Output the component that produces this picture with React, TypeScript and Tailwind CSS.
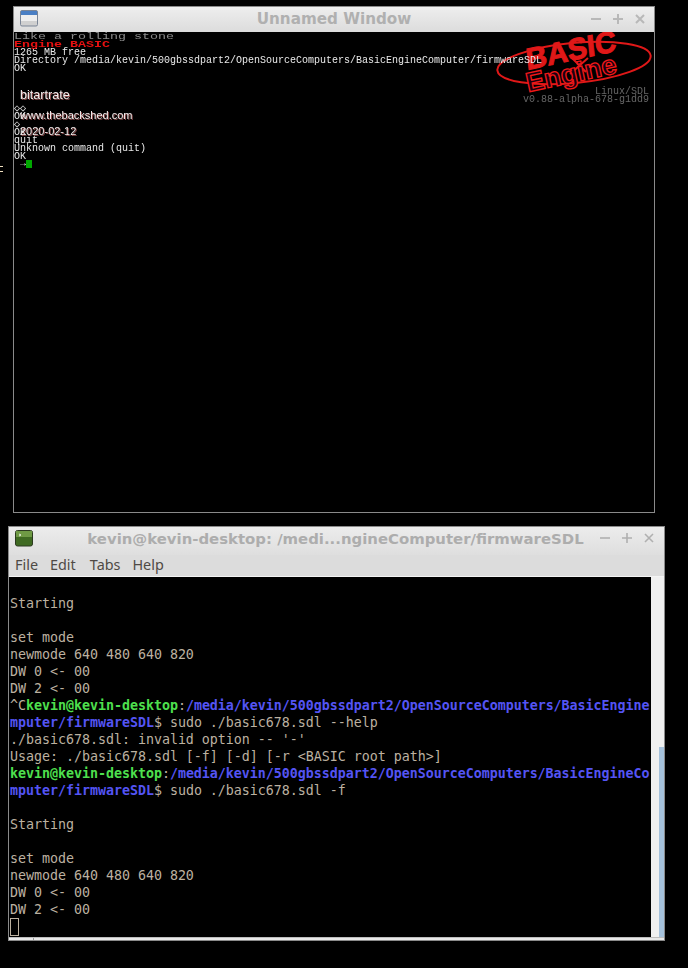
import React from "react";

const W = ({ c, children }: { c?: string; children: React.ReactNode }) => <span className={c}>{children}</span>;

function TermLine({ children }: { children?: React.ReactNode }) {
  return <div className="h-[17px] whitespace-pre">{children}</div>;
}

const G = "font-bold text-[#4ee04e]";
const B = "font-bold text-[#5454f4]";

function Logo() {
  return (
    <svg className="absolute left-[480px] top-0" width="170" height="70" viewBox="0 0 170 70">
      <ellipse cx="80" cy="31" rx="77" ry="20" transform="rotate(-5.5 80 31)" fill="none" stroke="#e01818" strokeWidth="2" />
      <path d="M76 42L94 26M78 26l14 14" stroke="#e01818" strokeWidth="2" fill="none" />
      <g fontFamily="'Liberation Sans', sans-serif" fontWeight="700">
        <text transform="translate(33 38) rotate(-12) skewX(-6)" fontSize="30" fill="#e01818" stroke="#e01818" strokeWidth="1" textLength="92" lengthAdjust="spacingAndGlyphs">BASIC</text>
        <text transform="translate(34 60) rotate(-12)" fontSize="27" fill="#1a0010" stroke="#f01818" strokeWidth="1.3" textLength="92" lengthAdjust="spacingAndGlyphs">Engine</text>
      </g>
    </svg>
  );
}

export default function App() {
  return (
    <div className="relative w-[688px] h-[968px] bg-black overflow-hidden pt-[6px]">
      <div className="absolute left-0 top-[166px] flex flex-col gap-[4px]">
        <div className="w-[3px] h-px bg-[#f0e0c0]" />
        <div className="w-[3px] h-px bg-[#f0e0c0]" />
      </div>

      {/* top window */}
      <div className="ml-[13px] w-[642px] h-[507px] border border-[#8a8a8a] flex flex-col bg-black">
        <div className="relative h-[25px] shrink-0 bg-gradient-to-b from-[#eeeeee] to-[#dcdcdc] flex items-center justify-center pb-px">
          <svg className="absolute left-[6px] top-[3px]" width="18" height="17" viewBox="0 0 18 17">
            <rect x="0.5" y="0.5" width="17" height="15.5" rx="1.5" fill="#d0d0d0" stroke="#7a8596" />
            <rect x="1" y="1" width="16" height="4" fill="#4a7fc4" />
            <rect x="1" y="5" width="16" height="6" fill="#eeeeee" />
          </svg>
          <span className="font-['DejaVu_Sans',sans-serif] font-bold text-[15.2px] text-[#b0b0b0]">Unnamed Window</span>
          <div className="absolute right-[9px] top-[6px] flex gap-[12px] text-[#b8b8b8]">
            <svg width="10" height="12" viewBox="0 0 10 12"><path d="M0 6h10" stroke="currentColor" strokeWidth="2" /></svg>
            <svg width="10" height="12" viewBox="0 0 10 12"><path d="M0 6h10M5 1v10" stroke="currentColor" strokeWidth="2" /></svg>
            <svg width="10" height="12" viewBox="0 0 10 12"><path d="M1 2l8 8M9 2l-8 8" stroke="currentColor" strokeWidth="2" /></svg>
          </div>
        </div>
        <div className="relative flex-1 overflow-hidden">
          <Logo />
          <div className="relative z-10 font-['Liberation_Mono',monospace] text-[10px] leading-[8px] text-[#e8e8e8] whitespace-pre pt-px [will-change:transform]">
            <div className="h-[8px] text-[13.33px] text-[#8c8c8c] scale-y-[0.7] origin-center">Like a rolling stone</div>
            <div className="h-[8px] text-[13.33px] font-bold text-[#e81010] scale-y-[0.7] origin-center">Engine BASIC</div>
            <div className="h-[8px]">1265 MB free</div>
            <div className="h-[8px]">Directory /media/kevin/500gbssdpart2/OpenSourceComputers/BasicEngineComputer/firmwareSDL</div>
            <div className="h-[8px]">OK</div>
            <div className="h-[32px]" />
            <div className="h-[8px]">◇◇</div>
            <div className="h-[8px]">OK</div>
            <div className="h-[8px]">◇</div>
            <div className="h-[8px]">OK</div>
            <div className="h-[8px]">quit</div>
            <div className="h-[8px]">Unknown command (quit)</div>
            <div className="h-[8px]">OK</div>
            <div className="h-[8px] -mt-px flex items-center pl-[6px]">
              <span>→</span>
              <span className="w-[6px] h-[8px] bg-[#00a800]" />
            </div>
          </div>
          <div className="absolute z-20 left-[6px] top-[55px] font-['Liberation_Sans',sans-serif] text-[12.6px] leading-[16px] text-[#f4eeee] [text-shadow:1px_1px_0_#8a4a4a]">bitartrate</div>
          <div className="absolute z-20 left-[6px] top-[76px] font-['Liberation_Sans',sans-serif] text-[11px] leading-[14px] text-[#f4eeee] [text-shadow:1px_1px_0_#8a4a4a]">www.thebackshed.com</div>
          <div className="absolute z-20 left-[6px] top-[92px] font-['Liberation_Sans',sans-serif] text-[11px] leading-[14px] text-[#f4eeee] [text-shadow:1px_1px_0_#8a4a4a]">2020-02-12</div>
          <div className="absolute z-10 right-[5px] top-[56px] text-right font-['Liberation_Mono',monospace] text-[10px] leading-[8px] text-[#666666] whitespace-pre">
            <div className="h-[8px]">Linux/SDL</div>
            <div className="h-[8px]">v0.88-alpha-678-g1dd9</div>
          </div>
        </div>
      </div>

      {/* bottom window */}
      <div className="ml-[8px] mt-[13px] w-[657px] h-[415px] border border-[#8a8a8a] flex flex-col bg-[#dcdcdc]">
        <div className="relative h-[28px] shrink-0 bg-gradient-to-b from-[#ececec] to-[#dedede] flex items-center justify-center pb-[4px]">
          <svg className="absolute left-[6px] top-[3px]" width="18" height="17" viewBox="0 0 18 17">
            <rect x="0.5" y="0.5" width="17" height="15.5" rx="2" fill="#3f6a22" stroke="#2c3a20" />
            <rect x="1" y="1" width="16" height="6" fill="#6f9a45" />
            <path d="M4 4l2 1-2 1" stroke="#fff" strokeWidth="0.8" fill="none" />
          </svg>
          <span className="font-['DejaVu_Sans',sans-serif] font-bold text-[14.9px] text-[#adadad] pr-[2px]">kevin@kevin-desktop: /medi...ngineComputer/firmwareSDL</span>
          <div className="absolute right-[10px] top-[5px] flex gap-[12px] text-[#b0b0b0]">
            <svg width="10" height="12" viewBox="0 0 10 12"><path d="M0 6h10" stroke="currentColor" strokeWidth="1.6" /></svg>
            <svg width="10" height="12" viewBox="0 0 10 12"><path d="M0 6h10M5 1v10" stroke="currentColor" strokeWidth="1.6" /></svg>
            <svg width="10" height="12" viewBox="0 0 10 12"><path d="M1 2l8 8M9 2l-8 8" stroke="currentColor" strokeWidth="1.6" /></svg>
          </div>
        </div>
        <div className="h-[22px] shrink-0 flex items-center pl-[6px] pb-[2px] gap-[12px] font-['Noto_Sans','Open_Sans',sans-serif] text-[14.4px] text-[#4f4a45] border-b border-[#f4f4f4]">
          <span>File</span><span>Edit</span><span className="ml-[2px]">Tabs</span><span>Help</span>
        </div>
        <div className="flex-1 flex min-h-0">
          <div className="flex-1 bg-black pl-[1px] pt-[1px] font-['DejaVu_Sans_Mono',monospace] text-[13.33px] tracking-[-0.03px] leading-[17px] text-[#bcb1a0] overflow-hidden">
            <TermLine />
            <TermLine>Starting</TermLine>
            <TermLine />
            <TermLine>set mode</TermLine>
            <TermLine>newmode 640 480 640 820</TermLine>
            <TermLine>DW 0 {"<-"} 00</TermLine>
            <TermLine>DW 2 {"<-"} 00</TermLine>
            <TermLine>^C<W c={G}>kevin@kevin-desktop</W>:<W c={B}>/media/kevin/500gbssdpart2/OpenSourceComputers/BasicEngine</W></TermLine>
            <TermLine><W c={B}>mputer/firmwareSDL</W>$ sudo ./basic678.sdl --help</TermLine>
            <TermLine>./basic678.sdl: invalid option -- '-'</TermLine>
            <TermLine>Usage: ./basic678.sdl [-f] [-d] [-r {"<BASIC root path>"}]</TermLine>
            <TermLine><W c={G}>kevin@kevin-desktop</W>:<W c={B}>/media/kevin/500gbssdpart2/OpenSourceComputers/BasicEngineCo</W></TermLine>
            <TermLine><W c={B}>mputer/firmwareSDL</W>$ sudo ./basic678.sdl -f</TermLine>
            <TermLine />
            <TermLine>Starting</TermLine>
            <TermLine />
            <TermLine>set mode</TermLine>
            <TermLine>newmode 640 480 640 820</TermLine>
            <TermLine>DW 0 {"<-"} 00</TermLine>
            <TermLine>DW 2 {"<-"} 00</TermLine>
            <div className="w-[9px] h-[18px] border border-[#bcb1a0]" />
          </div>
          <div className="w-[13px] shrink-0 bg-[#f0f0f0] flex flex-col justify-end items-end">
            <div className="w-[5px] h-[190px] bg-[#a6c2dc]" />
          </div>
        </div>
        <div className="h-[3px] shrink-0 bg-[#e8e8e8] border-t border-[#bdbdbd] flex">
          <div className="w-[25px] border-r border-[#9a9a9a]" />
        </div>
      </div>
    </div>
  );
}
